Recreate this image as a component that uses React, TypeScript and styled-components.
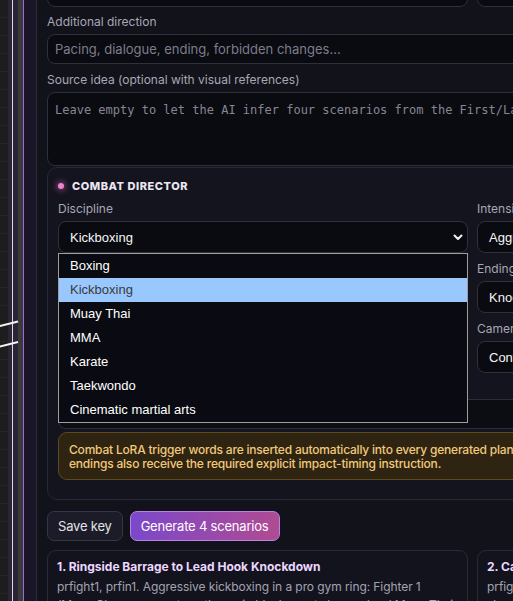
import React from "react";
import styled, { createGlobalStyle } from "styled-components";

const GlobalStyle = createGlobalStyle`
  html, body {
    margin: 0;
    padding: 0;
    background: #12121b;
    overflow: hidden;
  }
  body {
    font-family: Inter, "Noto Sans", sans-serif;
  }
  * {
    box-sizing: border-box;
  }
`;

const disciplines = [
  "Boxing",
  "Kickboxing",
  "Muay Thai",
  "MMA",
  "Karate",
  "Taekwondo",
  "Cinematic martial arts",
];

const sideFields = [
  { label: "Intensity", value: "Aggressive" },
  { label: "Ending", value: "Knockdown" },
  { label: "Camera", value: "Controlled ringside" },
];

const scenarios = [
  {
    title: "1. Ringside Barrage to Lead Hook Knockdown",
    body:
      "prfight1, prfin1. Aggressive kickboxing in a pro gym ring: Fighter 1 (Muay Chan, compact southpaw in black sports bra and red Muay Thai shorts)",
  },
  {
    title: "2. Cage Clinch to Spinning Back Fist",
    body:
      "prfight1, prfin1. Tight clinch work against the ropes, linked knees and short elbows",
  },
];

const Chevron = () => (
  <svg width="12" height="12" viewBox="0 0 12 12" fill="none">
    <path d="M2.5 4.5 6 8l3.5-3.5" stroke="#f2f2f2" strokeWidth="2" strokeLinecap="round" strokeLinejoin="round" />
  </svg>
);

const App = () => {
  return (
    <>
      <GlobalStyle />
      <Screen>
        <Canvas>
          <Wires width="36" height="601" viewBox="0 0 36 601">
            <line x1="-2" y1="326.5" x2="18" y2="321.5" stroke="#f4f4f4" strokeWidth="2" />
            <line x1="-2" y1="347" x2="18" y2="342" stroke="#f4f4f4" strokeWidth="2" />
          </Wires>
        </Canvas>

        <Panel>
          <TwoCols $offset={-23}>
            <TextInput />
            <TextInput />
          </TwoCols>

          <Field $top={7}>
            <Label>Additional direction</Label>
            <TextInput placeholder="Pacing, dialogue, ending, forbidden changes..." />
          </Field>

          <Field $top={8}>
            <Label>Source idea (optional with visual references)</Label>
            <TextArea placeholder="Leave empty to let the AI infer four scenarios from the First/Last frames and visual references." />
          </Field>

          <DirectorCard>
            <CardTitle>
              <Dot />
              Combat director
            </CardTitle>

            <DirectorGrid>
              <Field>
                <Label>Discipline</Label>
                <SelectWrap>
                  <SelectBox>
                    Kickboxing
                    <Chevron />
                  </SelectBox>
                  <OptionList>
                    {disciplines.map((d) => (
                      <Option key={d} $active={d === "Kickboxing"}>
                        {d}
                      </Option>
                    ))}
                  </OptionList>
                </SelectWrap>
              </Field>

              <Stack>
                {sideFields.map((f) => (
                  <Field key={f.label}>
                    <Label>{f.label}</Label>
                    <SelectBox>
                      {f.value}
                      <Chevron />
                    </SelectBox>
                  </Field>
                ))}
              </Stack>
            </DirectorGrid>

            <NotesBox />

            <Notice>
              Combat LoRA trigger words are inserted automatically into every generated plan, and knockout
              <br />
              endings also receive the required explicit impact-timing instruction.
            </Notice>
          </DirectorCard>

          <Actions>
            <GhostButton>Save key</GhostButton>
            <PrimaryButton>Generate 4 scenarios</PrimaryButton>
          </Actions>

          <TwoCols $offset={9}>
            {scenarios.map((s) => (
              <ScenarioCard key={s.title}>
                <ScenarioTitle>{s.title}</ScenarioTitle>
                <ScenarioBody>{s.body}</ScenarioBody>
              </ScenarioCard>
            ))}
          </TwoCols>
        </Panel>
      </Screen>
    </>
  );
};

export default App;

const Screen = styled.div`
  display: flex;
  width: 513px;
  height: 601px;
  overflow: hidden;
`;

// node editor edge peeking out behind the side panel
const Canvas = styled.div`
  position: relative;
  flex: 0 0 36px;
  background:
    repeating-linear-gradient(
      to bottom,
      transparent 0 17px,
      rgba(255, 255, 255, 0.035) 17px 18px
    ) 0 0 / 8px 100% no-repeat,
    linear-gradient(
      to right,
      #1d1d1e 0 8px,
      #2c2434 8px 12px,
      #ddd6e6 12px 13px,
      #2c2434 13px 18px,
      #3a3a3b 18px 23px,
      #9d6cd4 23px 24px,
      #1a1628 24px 36px
    );
`;

const Wires = styled.svg`
  position: absolute;
  left: 0;
  top: 0;
`;

const Panel = styled.div`
  flex: 0 0 872px;
  display: flex;
  flex-direction: column;
  padding: 0 10px;
  border-left: 1px solid #2d2a3d;
  background: #12121b;
`;

const TwoCols = styled.div<{ $offset: number }>`
  display: grid;
  grid-template-columns: 421px 421px;
  column-gap: 9px;
  margin-top: ${(p) => p.$offset}px;
`;

const Field = styled.div<{ $top?: number }>`
  display: flex;
  flex-direction: column;
  gap: 4px;
  margin-top: ${(p) => p.$top ?? 0}px;
`;

const Label = styled.label`
  font-size: 12px;
  line-height: 16px;
  color: #a7a7b5;
`;

const TextInput = styled.input`
  height: 30px;
  width: 100%;
  padding: 0 7px;
  border: 1px solid #2f2f3d;
  border-radius: 8px;
  background: #0a0a11;
  color: #e8e8f0;
  font-family: Inter, "Noto Sans", sans-serif;
  font-size: 13px;
  outline: none;

  &::placeholder {
    color: #7d7d8a;
  }
`;

const TextArea = styled.textarea`
  height: 74px;
  width: 100%;
  padding: 9px 7px;
  border: 1px solid #2f2f3d;
  border-radius: 8px;
  background: #0a0a11;
  color: #e8e8f0;
  font-family: "DejaVu Sans Mono", "Liberation Mono", monospace;
  font-size: 12px;
  line-height: 16px;
  resize: none;
  outline: none;
  white-space: nowrap;
  overflow: hidden;

  &::placeholder {
    color: #868692;
  }
`;

const DirectorCard = styled.section`
  margin-top: 1px;
  padding: 11px 10px 19px;
  border: 1px solid #282836;
  border-radius: 10px;
  background: #14141e;
`;

const CardTitle = styled.h3`
  display: flex;
  align-items: center;
  gap: 8px;
  margin: 0;
  font-size: 11px;
  line-height: 14px;
  font-weight: 800;
  letter-spacing: 0.05em;
  text-transform: uppercase;
  color: #ebe6f3;
`;

const Dot = styled.span`
  width: 6px;
  height: 6px;
  border-radius: 50%;
  background: #f27fcf;
  box-shadow: 0 0 6px 1px rgba(242, 127, 207, 0.55);
`;

const DirectorGrid = styled.div`
  display: grid;
  grid-template-columns: 410px 1fr;
  column-gap: 9px;
  align-items: start;
  margin-top: 8px;
`;

const Stack = styled.div`
  display: flex;
  flex-direction: column;
  gap: 8px;
`;

const SelectWrap = styled.div`
  position: relative;
`;

const SelectBox = styled.div`
  display: flex;
  align-items: center;
  justify-content: space-between;
  height: 32px;
  padding: 0 3px 0 11px;
  border: 1px solid #30303d;
  border-radius: 8px;
  background: #0a0a11;
  color: #f6f6f6;
  font-family: "Liberation Sans", Arial, sans-serif;
  font-size: 13px;
  white-space: nowrap;
  overflow: hidden;
`;

// native-style open option list of the discipline select
const OptionList = styled.ul`
  position: absolute;
  top: 100%;
  left: 0;
  right: 0;
  z-index: 5;
  margin: 0;
  padding: 0;
  list-style: none;
  border: 1px solid #9e9e9e;
  background: #0a0b12;
`;

const Option = styled.li<{ $active?: boolean }>`
  height: 24px;
  line-height: 24px;
  padding-left: 11px;
  font-family: "Liberation Sans", Arial, sans-serif;
  font-size: 13px;
  color: ${(p) => (p.$active ? "#3a3a3a" : "#ffffff")};
  background: ${(p) => (p.$active ? "#99c8ff" : "transparent")};
`;

const NotesBox = styled.div`
  height: 30px;
  margin-top: 26px;
  border: 1px solid #2c2c3a;
  border-radius: 8px;
  background: #0c0c13;
`;

const Notice = styled.div`
  margin-top: 3px;
  padding: 10px 10px 8px;
  border: 1px solid #5e4a1f;
  border-radius: 9px;
  background: #2f2411;
  color: #f1c97b;
  font-size: 12px;
  line-height: 14px;
  font-weight: 500;
  letter-spacing: -0.2px;
  white-space: nowrap;
  overflow: hidden;
`;

const Actions = styled.div`
  display: flex;
  gap: 7px;
  margin-top: 11px;
`;

const buttonBase = `
  height: 30px;
  padding: 0 10px;
  border-radius: 7px;
  font-family: Inter, "Noto Sans", sans-serif;
  font-size: 13px;
  letter-spacing: -0.2px;
  cursor: pointer;
`;

const GhostButton = styled.button`
  ${buttonBase}
  border: 1px solid #35354a;
  background: #1c1c29;
  color: #e2e2ea;
`;

const PrimaryButton = styled.button`
  ${buttonBase}
  border: 1px solid #b785e6;
  background: linear-gradient(90deg, #7b48ca, #b04b92);
  color: #ffffff;
`;

const ScenarioCard = styled.article`
  height: 80px;
  padding: 8px 9px;
  border: 1px solid #2a2a38;
  border-radius: 9px;
  background: #13131d;
  overflow: hidden;
`;

const ScenarioTitle = styled.h4`
  margin: 0;
  font-size: 12px;
  line-height: 16px;
  font-weight: 700;
  color: #ecd7ff;
  white-space: nowrap;
`;

const ScenarioBody = styled.p`
  margin: 3px 0 0;
  font-size: 12px;
  line-height: 18px;
  letter-spacing: -0.08px;
  color: #a3a3b1;
`;
